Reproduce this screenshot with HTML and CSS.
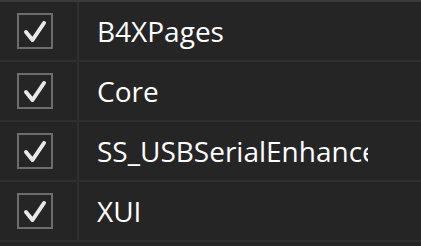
FILE: index.html
```html
<!DOCTYPE html>
<html lang="en">
<head>
  <meta charset="UTF-8" />
  <title>Libraries</title>
  <link rel="stylesheet" href="styles.css">
</head>
<body>
  <div class="lib-list">
    <div class="lib-row">
      <div class="check-cell"><span class="check"><svg viewBox="0 0 32 32"><path d="M7 17l6.5 8L25 8" /></svg></span></div>
      <div class="name-cell"><span class="name">B4XPages</span></div>
    </div>
    <div class="lib-row">
      <div class="check-cell"><span class="check"><svg viewBox="0 0 32 32"><path d="M7 17l6.5 8L25 8" /></svg></span></div>
      <div class="name-cell"><span class="name">Core</span></div>
    </div>
    <div class="lib-row">
      <div class="check-cell"><span class="check"><svg viewBox="0 0 32 32"><path d="M7 17l6.5 8L25 8" /></svg></span></div>
      <div class="name-cell"><span class="name">SS_USBSerialEnhanced</span></div>
    </div>
    <div class="lib-row">
      <div class="check-cell"><span class="check"><svg viewBox="0 0 32 32"><path d="M7 17l6.5 8L25 8" /></svg></span></div>
      <div class="name-cell"><span class="name">XUI</span></div>
    </div>
  </div>
</body>
</html>
```

FILE: styles.css
```css
body {
    margin: 0;
    background: #252525;
    font-family: 'Open Sans', 'Noto Sans', sans-serif;
    color: #ffffff;
    overflow: hidden;
}

.lib-list {
    border-top: 2px solid #3a3a3a;
}

.lib-row {
    display: flex;
    height: 58px;
    border-bottom: 2px solid #2f2f2f;
}

.check-cell {
    width: 60px;
    padding-left: 17px;
    border-right: 2px solid #2f2f2f;
    display: flex;
    align-items: center;
}

/* grey square with a white tick */
.check {
    width: 32px;
    height: 32px;
    border: 2px solid #6c6c6c;
}

.check svg {
    display: block;
    width: 32px;
    height: 32px;
    fill: none;
    stroke: #e8e8e8;
    stroke-width: 4;
    stroke-linecap: round;
    stroke-linejoin: round;
}

.name-cell {
    width: 271px;
    padding-left: 18px;
    display: flex;
    align-items: center;
    overflow: hidden;
    white-space: nowrap;
}

.name {
    font-size: 28px;
}
```
